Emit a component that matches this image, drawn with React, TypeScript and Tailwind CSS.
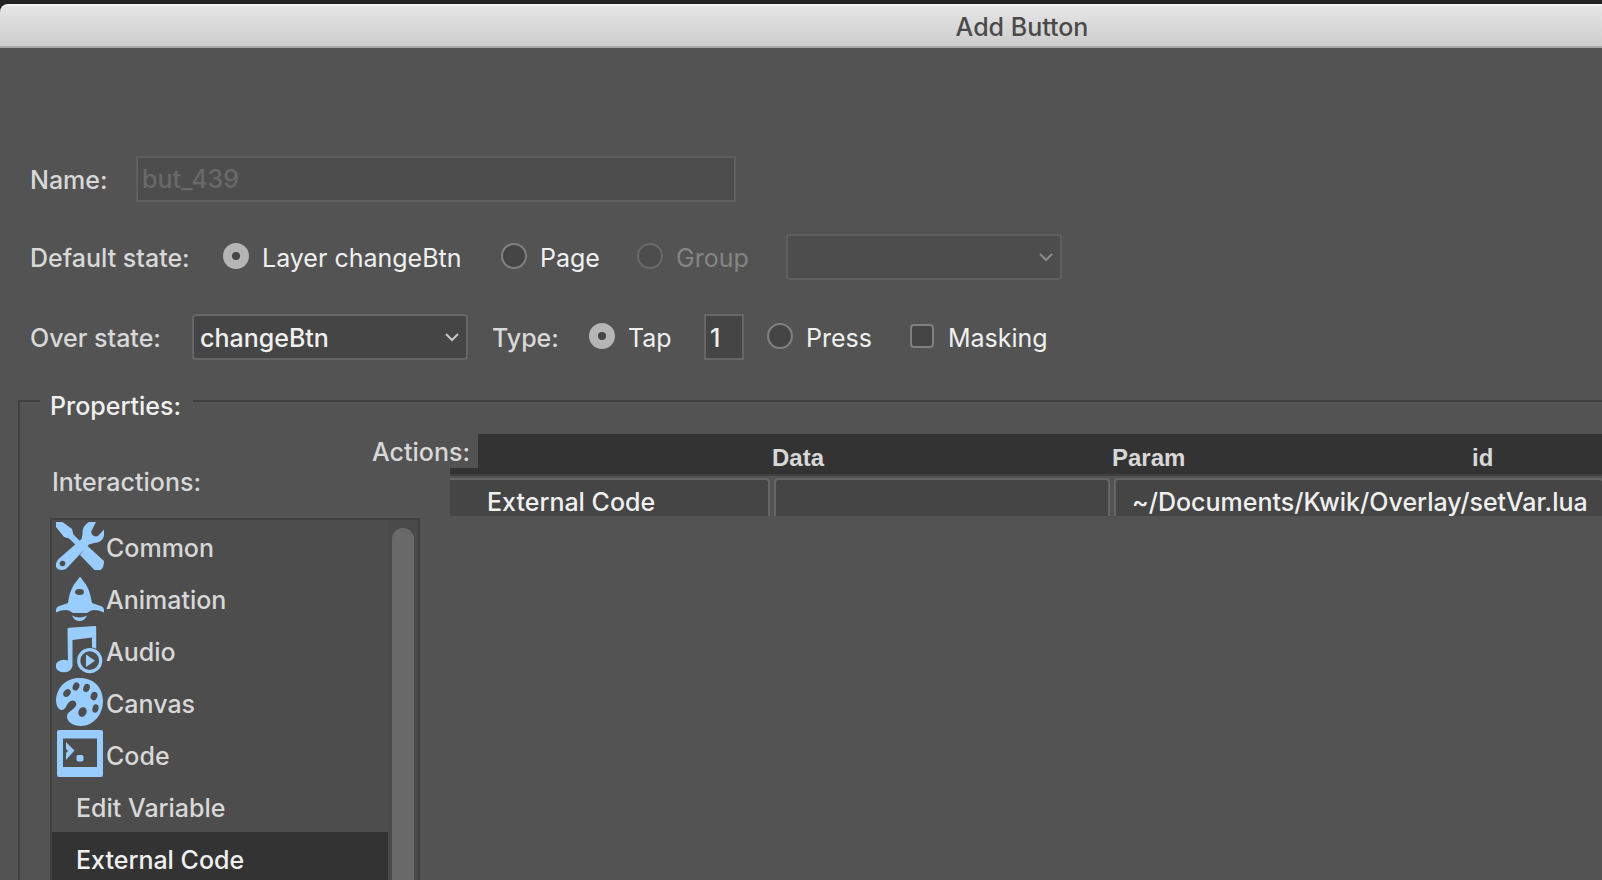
import type { ReactNode } from "react";

const ICON = "#99ccff";
const HOLE = "#4d4d4d";

function ToolsIcon() {
  return (
    <svg viewBox="0 0 48 48" className="size-12 shrink-0" aria-hidden="true">
      <path d="M0 0h6.500l9.500 7 1.500 5.500 9.500 9.500-4 4L13 16.500l-5-1.500L0 5z" fill={ICON} />
      <path d="M31 23.500 48 39q0 7-3.500 9h-6L24 33z" fill={ICON} />
      <path
        d="M40 0h-7q-7 4-6.500 12l-1 5L2.500 37Q-1 41 0 45q1.500 3 6 3 3.500 0 5.500-2.500L33 22.500l5-1.500q8 0 10-7V7.500l-5.500 6q-3 2-6-.5-2.500-3 0-6z"
        fill={ICON}
      />
      <circle cx="6.500" cy="41.500" r="2.800" fill={HOLE} />
    </svg>
  );
}

function RocketIcon() {
  return (
    <svg viewBox="0 0 48 48" className="size-12 shrink-0" aria-hidden="true">
      <path
        d="M24 2.500c2 3 6 7 8.500 13 2 5 2.500 9 3.500 13.500L46 32.500q2 1 2 3.500v2.500q-8-3.500-13-2l-4 2.500H17l-4-2.500Q7 35 0 38.500V36q0-2.500 2-3.500L12 29c1-5 1-8.500 3.500-13.500C18 9 22 6 24 2.500z"
        fill={ICON}
      />
      <ellipse cx="23.500" cy="18" rx="4.500" ry="3" fill={HOLE} />
      <path d="M16 41.500q3.500 2 7.500 2t7.500-2q-2.500 5.500-7.500 5.500T16 41.500z" fill={ICON} />
    </svg>
  );
}

function AudioIcon() {
  return (
    <svg viewBox="0 0 48 48" className="size-12 shrink-0" aria-hidden="true">
      <path d="M11.500 3q0-1 1.500-1.300L39 0q1.200 0 1.200 1.200V23H36V11.500L16.500 14v26h-4.500z" fill={ICON} />
      <ellipse cx="8" cy="40" rx="8.300" ry="6.300" fill={ICON} />
      <circle cx="33.700" cy="34.700" r="13.500" fill={HOLE} />
      <circle cx="33.700" cy="34.700" r="11" fill="none" stroke={ICON} strokeWidth="3.200" />
      <path d="M30 28.500v12.400l9-6.200z" fill={ICON} />
    </svg>
  );
}

function PaletteIcon() {
  return (
    <svg viewBox="0 0 48 48" className="size-12 shrink-0" aria-hidden="true">
      <path
        d="M24 0C37 0 47 9 47 23S37 48 25 48c-8 0-14-4-14-9.500 0-5 6-6 8.500-10 2.500-3.500-1-7.500-5-5.500-4 2-4 8.500-8.500 9C3 32.500 0 28 0 22 1 8 11 0 24 0z"
        fill={ICON}
      />
      <g fill={HOLE}>
        <ellipse cx="11" cy="15" rx="3.300" ry="4.200" transform="rotate(40 11 15)" />
        <ellipse cx="20" cy="8.500" rx="3.200" ry="4.200" transform="rotate(25 20 8.500)" />
        <ellipse cx="30.500" cy="10" rx="3.200" ry="4.200" transform="rotate(20 30.500 10)" />
        <ellipse cx="38" cy="18" rx="3.300" ry="4.200" transform="rotate(20 38 18)" />
        <ellipse cx="39.500" cy="30.500" rx="3" ry="4.200" transform="rotate(15 39.500 30.500)" />
        <ellipse cx="26.500" cy="34" rx="4" ry="5" transform="rotate(25 26.500 34)" />
      </g>
    </svg>
  );
}

function CodeIcon() {
  return (
    <svg viewBox="0 0 48 48" className="size-12 shrink-0" aria-hidden="true">
      <path fillRule="evenodd" d="M3 0h42q2 0 2 2v43q0 2-2 2H3q-2 0-2-2V2q0-2 2-2zm4 8.500V37h34V8.500z" fill={ICON} />
      <path d="M10 12l8.500 8.500L10 30v-7l2-2-2-2z" fill={ICON} />
      <rect x="20.500" y="25" width="7" height="6.500" rx="2" fill={ICON} />
    </svg>
  );
}

function Chevron({ className }: { className: string }) {
  return (
    <svg viewBox="0 0 14 9" className={`pointer-events-none absolute top-[19px] right-[9px] w-3.5 ${className}`} aria-hidden="true">
      <path d="M1 1l6 6 6-6" fill="none" stroke="currentColor" strokeWidth="2" />
    </svg>
  );
}

const field = "h-[46px] border-2 border-[#666666] bg-[#454545] pt-0.5 text-[#f0f0f0] outline-none";

type ChoiceProps = {
  id: string;
  name: string;
  label: string;
  className: string;
  checked?: boolean;
  disabled?: boolean;
};

function Choice({ id, name, label, className, checked, disabled }: ChoiceProps) {
  return (
    <span className={`flex items-center gap-[13px] font-normal ${className}`}>
      <input
        type="radio"
        id={id}
        name={name}
        defaultChecked={checked}
        disabled={disabled}
        className="mb-0.5 size-[26px] shrink-0 appearance-none rounded-full border-2 border-[#808080] bg-[#454545] checked:border-[9px] checked:border-[#b5b5b5] disabled:border-[#696969] disabled:bg-[#4d4d4d]"
      />
      <label htmlFor={id} className={disabled ? "pt-0.5 text-[#858585]" : "pt-0.5 text-[#f0f0f0]"}>
        {label}
      </label>
    </span>
  );
}

const categories: { label: string; icon: ReactNode }[] = [
  { label: "Common", icon: <ToolsIcon /> },
  { label: "Animation", icon: <RocketIcon /> },
  { label: "Audio", icon: <AudioIcon /> },
  { label: "Canvas", icon: <PaletteIcon /> },
  { label: "Code", icon: <CodeIcon /> },
];

export default function App() {
  return (
    <div className="flex h-screen flex-col overflow-hidden bg-[#222222] pt-1 font-['Inter',sans-serif] text-[25px] leading-8 font-medium whitespace-nowrap text-[#d8d8d8]">
      <header className="flex h-11 shrink-0 items-center justify-center rounded-tl-lg border-t-2 border-b-2 border-t-[#f2f2f2] border-b-[#a6a9a8] bg-linear-to-b from-[#e6e6e6] to-[#cdcdcd] pt-0.5 pl-[442px]">
        <h1 className="text-[#4a4a4a]">Add Button</h1>
      </header>

      <form className="flex min-h-0 flex-1 flex-col bg-[#535353] pt-[108px]">
        <div className="flex items-center pl-[30px]">
          <label htmlFor="name" className="w-[106px] pt-0.5">Name:</label>
          <input
            id="name"
            defaultValue="but_439"
            disabled
            className="h-[46px] w-[600px] border-2 border-[#5f5f5f] bg-[#4d4d4d] px-1 text-[#696969]"
          />
        </div>

        <div className="mt-8 flex items-center pl-[30px]">
          <span className="w-[193px] pt-0.5">Default state:</span>
          <Choice id="layer" name="default" label="Layer changeBtn" className="w-[278px]" checked />
          <Choice id="page" name="default" label="Page" className="w-[136px]" />
          <Choice id="group" name="default" label="Group" className="w-[149px]" disabled />
          <span className="relative">
            <select aria-label="Group layer" disabled className="h-[46px] w-[276px] appearance-none rounded border-2 border-[#5f5f5f] bg-[#4d4d4d] opacity-100">
              <option value="" />
            </select>
            <Chevron className="text-[#8a8a8a]" />
          </span>
        </div>

        <div className="mt-[34px] flex items-center pl-[30px]">
          <label htmlFor="over" className="w-[162px] pt-0.5">Over state:</label>
          <span className="relative">
            <select id="over" className={`${field} w-[276px] appearance-none rounded px-1.5`}>
              <option>changeBtn</option>
            </select>
            <Chevron className="text-[#c8c8c8]" />
          </span>
          <span className="ml-6 w-[97px] pt-0.5">Type:</span>
          <Choice id="tap" name="type" label="Tap" className="w-[115px]" checked />
          <input aria-label="Tap count" defaultValue="1" className={`${field} w-10 px-1`} />
          <Choice id="press" name="type" label="Press" className="ml-[23px] w-[143px]" />
          <input
            id="masking"
            type="checkbox"
            className="mb-0.5 size-6 shrink-0 appearance-none rounded border-2 border-[#808080] bg-[#454545] checked:bg-[#b5b5b5]"
          />
          <label htmlFor="masking" className="ml-3.5 pt-0.5 font-normal text-[#f0f0f0]">Masking</label>
        </div>

        <fieldset className="mt-[30px] -mr-1 ml-[18px] flex min-h-0 flex-1 items-stretch border-2 border-b-0 border-[#404040] pl-[30px]">
          <legend className="-ml-[10px] h-[22px] pr-3 pl-2.5 text-[#f0f0f0]">Properties:</legend>
          <div className="flex h-full items-start">
            <section className="flex h-full w-[370px] shrink-0 flex-col pt-[54px]">
              <h2 className="pl-0.5">Interactions:</h2>
              <div className="mt-5 flex min-h-0 flex-1 justify-between overflow-hidden border-2 border-b-0 border-[#404040] bg-[#4d4d4d]">
                <ul className="flex-1">
                  {categories.map(({ label, icon }) => (
                    <li key={label} className="flex h-13 items-center gap-0.5 pl-1">
                      {icon}
                      <span className="pt-1">{label}</span>
                    </li>
                  ))}
                  <li className="flex h-13 items-center pt-1 pl-6">Edit Variable</li>
                  <li className="flex h-13 items-center bg-[#333333] pt-1 pl-6 text-[#f0f0f0]">External Code</li>
                </ul>
                <div className="w-[30px] bg-[#4a4a4a] px-1 pt-2">
                  <div className="h-full w-[22px] rounded-t-full bg-[#696969]" />
                </div>
              </div>
            </section>

            <section className="relative ml-[30px] min-w-0 flex-1 pt-[22px]">
              <h2 className="absolute right-full -mr-7 h-[34px] bg-[#535353] pt-0.5 pr-2">Actions:</h2>
              <table className="w-full table-fixed border-collapse text-left">
                <colgroup>
                  <col className="w-[322px]" />
                  <col className="w-[340px]" />
                  <col className="w-[360px]" />
                  <col />
                </colgroup>
                <thead className="bg-[#333333] font-['Liberation_Sans',sans-serif] text-2xl">
                  <tr className="h-10">
                    <th aria-label="Action" />
                    <th className="p-0 pt-2">Data</th>
                    <th className="p-0 pt-2">Param</th>
                    <th className="p-0 pt-2">id</th>
                  </tr>
                </thead>
                <tbody className="text-[#f0f0f0]">
                  <tr>
                    <td className="border-t-2 border-[#404040] p-0 pt-0.5">
                      <div className="mr-0.5 h-[38px] overflow-hidden rounded-tr border-t-2 border-r-2 border-[#666666] bg-[#454545] pt-1.5 pl-[37px]">External Code</div>
                    </td>
                    <td className="border-t-2 border-[#404040] p-0 pt-0.5">
                      <div className="mx-0.5 h-[38px] rounded-t border-2 border-b-0 border-[#666666] bg-[#454545]" />
                    </td>
                    <td colSpan={2} className="border-t-2 border-[#404040] p-0 pt-0.5">
                      <div className="ml-0.5 h-[38px] overflow-hidden rounded-t border-2 border-b-0 border-[#666666] bg-[#454545] pt-1.5 pl-4">~/Documents/Kwik/Overlay/setVar.lua</div>
                    </td>
                  </tr>
                </tbody>
              </table>
            </section>
          </div>
        </fieldset>
      </form>
    </div>
  );
}
